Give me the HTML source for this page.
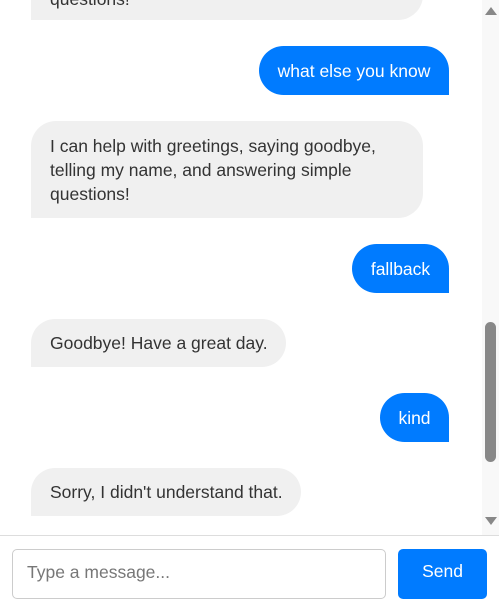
<!DOCTYPE html>
<html><head><style>
body{margin:0;width:499px;height:595px;overflow:hidden;background:#fff;font-family:"Liberation Sans",Arial,sans-serif;font-size:17.5px;position:relative}
.b{position:absolute;box-sizing:border-box;padding:0 19px;line-height:24px;display:flex;align-items:center;white-space:nowrap}
.bot{background:#f0f0f0;color:#333;left:31px;border-radius:25px 25px 25px 0}
.usr{background:#007bff;color:#fff;right:50px;border-radius:25px 25px 0 25px;justify-content:center;padding:0}
</style></head><body>
<div class="b bot" style="top:-30px;height:50px;width:392px;overflow:hidden"><span style="position:absolute;left:19px;top:17px">questions!</span></div>
<div class="b usr" style="top:46px;height:49px;width:190px">what else you know</div>
<div class="b bot" style="top:121px;height:97px;width:392px;white-space:normal">I can help with greetings, saying goodbye,<br>telling my name, and answering simple<br>questions!</div>
<div class="b usr" style="top:244px;height:49px;width:97px">fallback</div>
<div class="b bot" style="top:319px;height:48px;width:255px">Goodbye! Have a great day.</div>
<div class="b usr" style="top:393px;height:49px;width:69px">kind</div>
<div class="b bot" style="top:468px;height:48px;width:270px">Sorry, I didn't understand that.</div>
<div style="position:absolute;left:482px;top:0;width:17px;height:535px;background:#f8f8f8"></div>
<div style="position:absolute;left:485px;top:7px;width:0;height:0;border-left:6px solid transparent;border-right:6px solid transparent;border-bottom:8px solid #888"></div>
<div style="position:absolute;left:485px;top:517px;width:0;height:0;border-left:6px solid transparent;border-right:6px solid transparent;border-top:8px solid #888"></div>
<div style="position:absolute;left:485px;top:322px;width:11px;height:140px;background:#888;border-radius:6px"></div>
<div style="position:absolute;left:0;top:535px;width:499px;height:1px;background:#ddd"></div>
<div style="position:absolute;left:12px;top:549px;width:374px;height:50px;box-sizing:border-box;border:1px solid #ccc;border-radius:5px;color:#777;padding-left:14px;line-height:44px">Type a message...</div>
<div style="position:absolute;left:398px;top:549px;width:89px;height:50px;background:#007bff;border-radius:5px;color:#fff;text-align:center;line-height:44px">Send</div>
</body></html>
